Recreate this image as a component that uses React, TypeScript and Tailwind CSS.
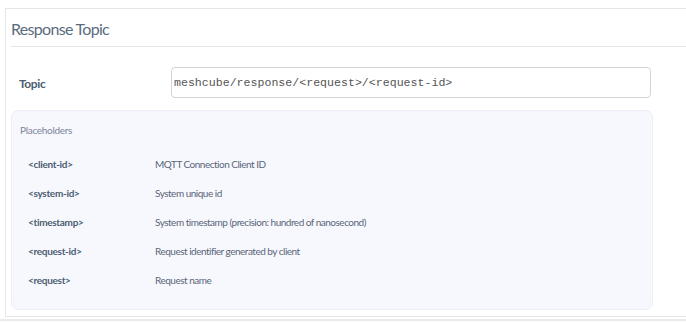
const placeholders: [string, string][] = [
  ['<client-id>', 'MQTT Connection Client ID'],
  ['<system-id>', 'System unique id'],
  ['<timestamp>', 'System timestamp (precision: hundred of nanosecond)'],
  ['<request-id>', 'Request identifier generated by client'],
  ['<request>', 'Request name'],
];

export default function App() {
  return (
    <div className="h-[322px] w-[686px] overflow-hidden bg-white font-['Lato','Liberation_Sans',sans-serif]">
      <div className="pt-2 pl-[5px]">
        <div className="h-[309px] border-t border-b border-l border-[#e4e6ea] pl-[5px]">
          <div className="flex h-[38px] items-center border-b border-[#e4e6ea] pt-[2px]">
            <h2 className="text-[16px] tracking-[-0.7px] text-[#5a6b80]">Response Topic</h2>
          </div>
          <div className="flex items-center pt-5 pb-3">
            <label className="w-[160px] pl-2 pt-[3px] text-[12px] font-bold tracking-[-0.4px] text-[#4d5d71]">Topic</label>
            <div className="flex h-[31px] w-[480px] items-center rounded-[4px] border border-[#d4d4d4] px-[2px] pt-[1px] font-['Liberation_Mono',monospace] text-[11.6px] text-[#555]">
              meshcube/response/&lt;request&gt;/&lt;request-id&gt;
            </div>
          </div>
          <div className="h-[200px] w-[642px] rounded-[7px] border border-[#eceef8] bg-[#f7f8fe] pt-3 pl-2">
            <div className="text-[10px] tracking-[-0.3px] text-[#7a8699]">Placeholders</div>
            <div className="mt-[18px] flex flex-col gap-[13px] pl-2">
              {placeholders.map(([key, desc]) => (
                <div key={key} className="flex h-4 items-center text-[10px]">
                  <span className="w-[127px] font-bold tracking-[-0.3px] text-[#4d5d71]">{key}</span>
                  <span className="tracking-[-0.5px] text-[#5a6678]">{desc}</span>
                </div>
              ))}
            </div>
          </div>
        </div>
        <div className="-ml-[5px] mt-[2px] h-[2px] bg-[#e8eaee]" />
      </div>
    </div>
  );
}
